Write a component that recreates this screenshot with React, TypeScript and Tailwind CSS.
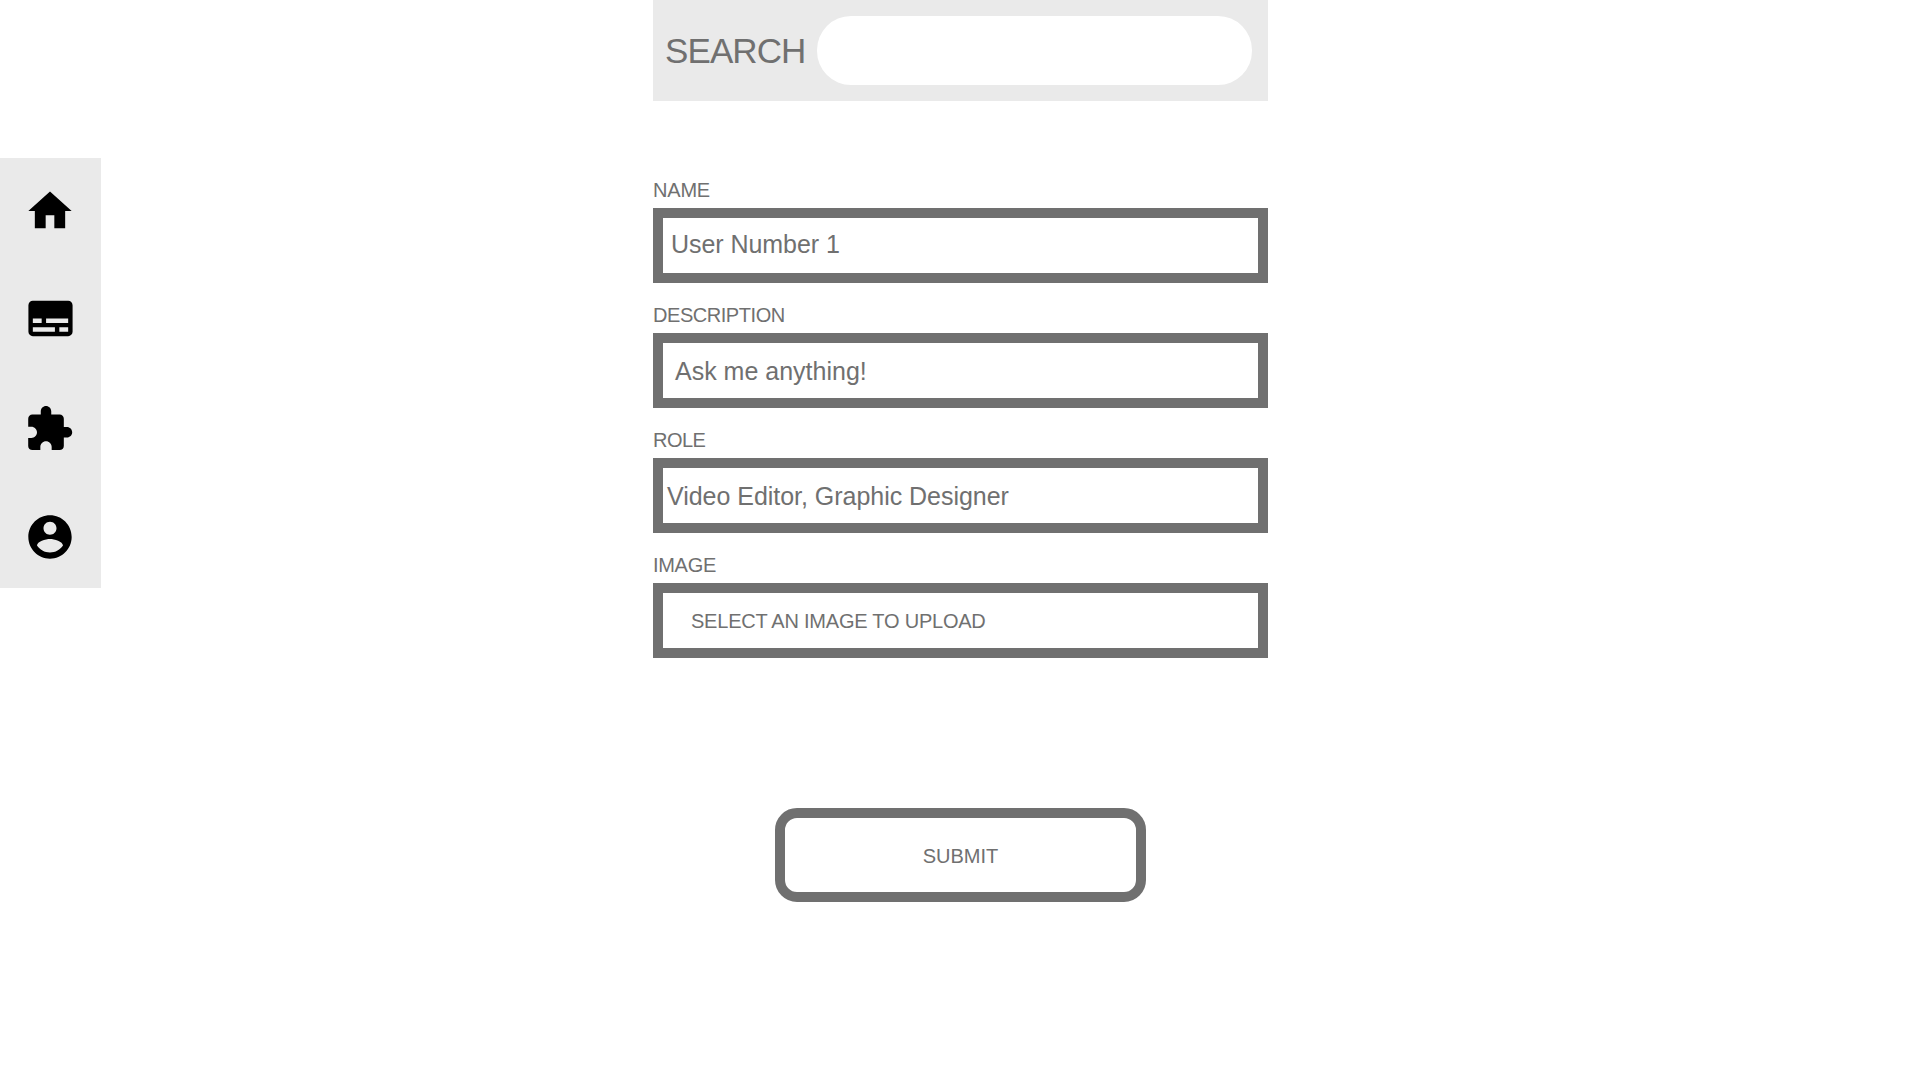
import React from "react";

const icons = [
  {
    name: "Home",
    box: "h-[52px] w-[52px]",
    slot: "pt-[27px] pr-px",
    d: "M10 20v-6h4v6h5v-8h3L12 3 2 12h3v8z",
  },
  {
    name: "Posts",
    box: "h-[53px] w-[53px]",
    slot: "pt-[25px] pr-px",
    d: "M20 4H4c-1.1 0-2 .9-2 2v12c0 1.1.9 2 2 2h16c1.1 0 2-.9 2-2V6c0-1.1-.9-2-2-2zM4 12h4v2H4v-2zm10 6H4v-2h10v2zm6 0h-4v-2h4v2zm0-4H10v-2h10v2z",
  },
  {
    name: "Extensions",
    box: "h-[50.3px] w-[50.3px]",
    slot: "pt-[28px] pr-[3px]",
    d: "M20.5 11H19V7c0-1.1-.9-2-2-2h-4V3.5C13 2.12 11.88 1 10.5 1S8 2.12 8 3.5V5H4c-1.1 0-1.99.9-1.99 2v3.8H3.5c1.49 0 2.7 1.21 2.7 2.7s-1.21 2.7-2.7 2.7H2V20c0 1.1.9 2 2 2h3.8v-1.5c0-1.49 1.21-2.7 2.7-2.7 1.49 0 2.7 1.21 2.7 2.7V22H17c1.1 0 2-.9 2-2v-4h1.5c1.38 0 2.5-1.12 2.5-2.5S21.88 11 20.5 11z",
  },
  {
    name: "Account",
    box: "h-[52px] w-[52px]",
    slot: "pt-[26px] pr-px",
    d: "M12 2C6.48 2 2 6.48 2 12s4.48 10 10 10 10-4.48 10-10S17.52 2 12 2zm0 3c1.66 0 3 1.34 3 3s-1.34 3-3 3-3-1.34-3-3 1.34-3 3-3zm0 14.2c-2.5 0-4.71-1.28-6-3.22.03-1.99 4-3.08 6-3.08 1.99 0 5.97 1.09 6 3.08-1.29 1.94-3.5 3.22-6 3.22z",
  },
];

const fields = [
  { label: "NAME", labelStyle: "tracking-[-0.2px]", value: "User Number 1", valueStyle: "pl-[8px] pb-[4px] text-[25px] tracking-[-0.05px]" },
  { label: "DESCRIPTION", labelStyle: "tracking-[-0.45px]", value: "Ask me anything!", valueStyle: "pl-[12px] text-[25px]" },
  { label: "ROLE", labelStyle: "tracking-[-0.5px]", value: "Video Editor, Graphic Designer", valueStyle: "pl-[4px] text-[25px] tracking-[-0.03px]" },
  { label: "IMAGE", labelStyle: "tracking-[-0.3px]", value: "SELECT AN IMAGE TO UPLOAD", valueStyle: "pl-[28px] pt-px text-[20px] tracking-[-0.22px]" },
];

export default function App() {
  return (
    <div className="flex h-screen w-full overflow-hidden bg-white font-['Liberation_Sans',Arial,sans-serif] text-[#707070]">
      <nav className="mt-[158px] flex h-[430px] w-[101px] shrink-0 flex-col bg-[#eaeaea]">
        {icons.map((icon) => (
          <a key={icon.name} aria-label={icon.name} className={`flex h-[109px] shrink-0 justify-center ${icon.slot}`}>
            <svg viewBox="0 0 24 24" className={`shrink-0 fill-black ${icon.box}`}>
              <path d={icon.d} />
            </svg>
          </a>
        ))}
      </nav>
      <main className="ml-[552px] flex w-[615px] shrink-0 flex-col">
        <header className="flex h-[101px] shrink-0 items-center bg-[#eaeaea] pr-4 pl-3">
          <span className="w-[152px] pt-px text-[35px] leading-[36px] tracking-[-0.9px] whitespace-nowrap">SEARCH</span>
          <div className="h-[69px] w-[435px] rounded-[34px] bg-white" />
        </header>
        <form className="mt-[77px] flex flex-col">
          {fields.map((f) => (
            <div key={f.label} className="flex h-[125px] flex-col">
              <label className={`h-[30px] text-[20px] leading-[24px] whitespace-nowrap ${f.labelStyle}`}>{f.label}</label>
              <div className="flex h-[75px] items-center border-10 border-[#707070]">
                <span className={`leading-[30px] whitespace-nowrap ${f.valueStyle}`}>{f.value}</span>
              </div>
            </div>
          ))}
          <button type="button" className="mt-[130px] ml-[122px] flex h-[94px] w-[371px] items-center justify-center rounded-[22px] border-10 border-[#707070] pt-px text-[20px]">
            SUBMIT
          </button>
        </form>
      </main>
    </div>
  );
}
